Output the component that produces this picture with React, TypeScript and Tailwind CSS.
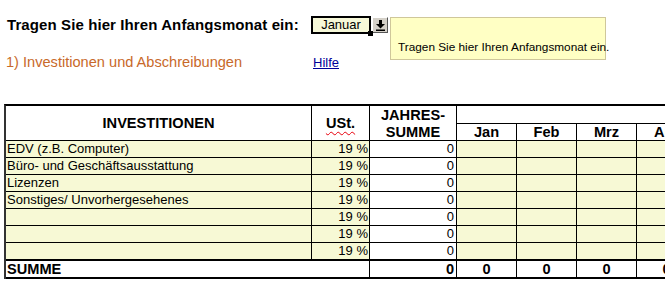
import React from 'react';

// spreadsheet-like investment sheet

const rows = [
  'EDV (z.B. Computer)',
  'Büro- und Geschäftsausstattung',
  'Lizenzen',
  'Sonstiges/ Unvorhergesehenes',
  '',
  '',
  '',
];

const months = ['Jan', 'Feb', 'Mrz', 'Apr'];

const cols = 'grid grid-cols-[306px_58px_87px_60px_60px_60px_60px]';

export default function App() {
  return (
    <div className="relative w-[665px] h-[294px] overflow-hidden bg-white text-black font-['Liberation_Sans',Arial,sans-serif]">
      {/* month picker */}
      <div className="flex items-start pt-[16px]">
        <div className="w-[311px] pl-[7px] text-[15px] font-bold leading-[17px] tracking-[0.1px]">
          Tragen Sie hier Ihren Anfangsmonat ein:
        </div>
        <div className="relative w-[60px] h-[18px] border-2 border-black bg-[#f6f8d8] text-[13px] leading-[14px] text-center">
          Januar
          <div className="absolute right-[-4px] bottom-[-4px] w-[5px] h-[5px] bg-black" />
        </div>
        <div className="ml-[1px] mt-[1px] w-[16px] h-[16px] bg-[#d4d0c8] border border-t-white border-l-white border-r-[#555] border-b-[#555] flex items-center justify-center">
          <svg width="9" height="11" viewBox="0 0 9 11">
            <rect x="3" y="0" width="3" height="4" fill="#000" />
            <polygon points="0,4 9,4 4.5,8.5" fill="#000" />
            <rect x="0" y="9.5" width="9" height="1.5" fill="#000" />
          </svg>
        </div>
      </div>

      <div className="flex items-center mt-[20px] h-[17px]">
        <div className="w-[313px] pl-[6px] text-[14.6px] leading-[17px] text-[#c8692a]">
          1) Investitionen und Abschreibungen
        </div>
        <a href="#" className="text-[13px] leading-[16px] text-[#000099] underline">
          Hilfe
        </a>
      </div>

      {/* tooltip */}
      <div className="absolute left-[390px] top-[17px] w-[216px] h-[43px] bg-[#ffffc4] border border-[#cfc79a] flex items-end pl-[7px] pb-[5px]">
        <span className="text-[11.8px] leading-[14px] whitespace-nowrap">Tragen Sie hier Ihren Anfangsmonat ein.</span>
      </div>

      {/* table */}
      <div className="mt-[33px] ml-[4px] w-[693px] border-l-2 border-l-[#333] border-t-2 border-t-black">
        <div className={`${cols} grid-rows-[18px_17px] text-[14.6px] font-bold leading-[15px]`}>
          <div className="row-span-2 border-r border-b border-black flex items-center justify-center pt-[1px]">
            INVESTITIONEN
          </div>
          <div className="row-span-2 border-r border-b border-black flex items-center justify-center pt-[1px]">
            <span className="underline decoration-wavy decoration-red-600 decoration-1 underline-offset-[3px]">USt.</span>
          </div>
          <div className="row-span-2 border-r border-b border-black flex flex-col items-center justify-center leading-[17px] pt-[1px]">
            <span>JAHRES-</span>
            <span>SUMME</span>
          </div>
          <div className="col-span-4 border-b border-black" />
          {months.map((m) => (
            <div key={m} className="border-r border-b border-black flex items-center justify-center pt-[1px]">
              {m}
            </div>
          ))}
        </div>

        {rows.map((label, i) => (
          <div
            key={i}
            className={`${cols} text-[13px] leading-[16px] ${i === rows.length - 1 ? 'h-[18px] border-b-2' : 'h-[17px] border-b'} border-black`}
          >
            <div className="bg-[#f7f9d5] border-r border-black pl-[1px] whitespace-nowrap">{label}</div>
            <div className="bg-[#f7f9d5] border-r border-black text-right pr-[1px]">19 %</div>
            <div className="bg-white border-r border-black text-right pr-[2px]">0</div>
            {months.map((m) => (
              <div key={m} className="bg-[#f7f9d5] border-r border-black" />
            ))}
          </div>
        ))}

        <div className={`${cols} h-[18px] border-b-2 border-black text-[14.6px] font-bold leading-[16px]`}>
          <div className="col-span-2 border-r border-black pl-[1px]">SUMME</div>
          <div className="border-r border-black text-right pr-[2px]">0</div>
          {months.map((m) => (
            <div key={m} className="border-r border-black text-center">0</div>
          ))}
        </div>
      </div>
    </div>
  );
}
